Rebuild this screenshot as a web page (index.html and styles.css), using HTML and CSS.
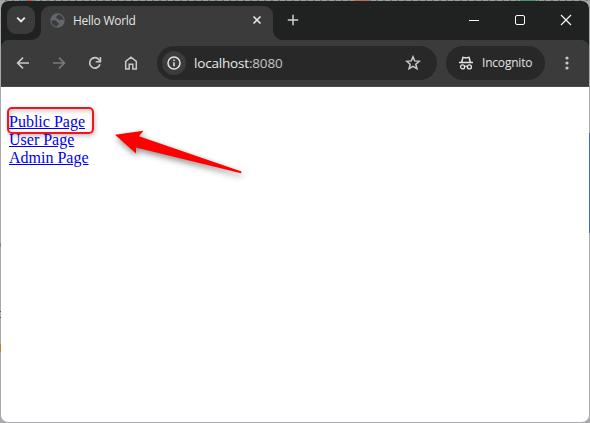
FILE: index.html
```html
<!DOCTYPE html>
<html lang="en">
<head>
<meta charset="utf-8">
<title>Hello World</title>
<link rel="stylesheet" href="styles.css">
</head>
<body>
<div class="desktop">
  <div class="window">
    <header class="tabstrip">
      <button class="tab-search" aria-label="Search tabs">
        <svg width="10" height="8" viewBox="0 0 10 8"><path d="M1.2 1.7 5 5.5l3.8-3.8" fill="none" stroke="#e8e8e8" stroke-width="1.9"/></svg>
      </button>
      <div class="tab">
        <svg class="globe" width="15" height="15" viewBox="0 0 15 15"><circle cx="7.5" cy="7.5" r="7.2" fill="#62676d"/><path d="M9.8 1.9C7.4 1.6 7.6 3 6.6 3.6 5.4 4.4 6 5.6 7.3 5.6c1.3 0 .9 1.5 2.3 1.5 1 0 1.4-.8 2.4-.5l1.6.9c.1-2.6-1.4-4.8-3.8-5.6M1.5 7.2h3.2c1.7 0 2.5 1 2.3 2.2h1.7v1.8L7 13.3c-3.4-.2-5.6-2.8-5.5-6.1" fill="#3b3b3b"/></svg>
        <span class="tab-title">Hello World</span>
        <svg class="tab-close" width="10" height="10" viewBox="0 0 10 10"><path d="m1.5 1.5 7 7m0-7-7 7" stroke="#e4e4e4" stroke-width="1.6"/></svg>
      </div>
      <svg class="new-tab" width="12" height="12" viewBox="0 0 12 12"><path d="M6 .8v10.4M.8 6h10.4" stroke="#cfcfcf" stroke-width="1.5"/></svg>
      <div class="controls">
        <svg width="12" height="12" viewBox="0 0 12 12"><path d="M1 6.5h10" stroke="#fff"/></svg>
        <svg width="12" height="12" viewBox="0 0 12 12"><rect x="1.5" y="1.5" width="9" height="9" rx="1.5" fill="none" stroke="#fff"/></svg>
        <svg width="12" height="12" viewBox="0 0 12 12"><path d="m1 1 10 10M11 1 1 11" stroke="#fff" stroke-width="1.1"/></svg>
      </div>
    </header>
    <nav class="toolbar">
      <div class="nav-icons">
        <svg width="16" height="16" viewBox="0 0 16 16"><path d="M14 8H3M8 2.6 2.6 8 8 13.4" fill="none" stroke="#c9c9c9" stroke-width="1.6"/></svg>
        <svg width="16" height="16" viewBox="0 0 16 16"><path d="M2 8h11M8 2.6 13.4 8 8 13.4" fill="none" stroke="#7b7b7b" stroke-width="1.6"/></svg>
        <svg width="16" height="16" viewBox="0 0 16 16"><path d="M12.9 9.2A5.2 5.2 0 1 1 12 4.7l1 1.3" fill="none" stroke="#c9c9c9" stroke-width="1.7"/><path d="M13.4 2v4.8H8.7" fill="none" stroke="#c9c9c9" stroke-width="1.6"/></svg>
        <svg width="16" height="16" viewBox="0 0 16 16"><path d="M2.7 14V6.3L8 2.2l5.3 4.1V14H9.8V9.2H6.2V14z" fill="none" stroke="#c9c9c9" stroke-width="1.5"/></svg>
      </div>
      <div class="omnibox">
        <span class="site-info"><svg width="14" height="14" viewBox="0 0 14 14"><circle cx="7" cy="7" r="6" fill="none" stroke="#e3e3e3" stroke-width="1.5"/><path d="M7 6.2v4M7 3.6v1.5" stroke="#e3e3e3" stroke-width="1.5"/></svg></span>
        <span class="url">localhost<span class="port">:8080</span></span>
        <svg class="star" width="16" height="16" viewBox="0 0 16 16"><path d="m8 1.8 1.7 4.1 4.6.4-3.5 3 1.1 4.4L8 11.3l-3.9 2.4 1.1-4.4-3.5-3 4.6-.4z" fill="none" stroke="#c9c9c9" stroke-width="1.5"/></svg>
      </div>
      <div class="incognito">
        <svg width="16" height="14" viewBox="0 0 16 14"><path d="M1 6.5h14M3.7 6 5 1.3l3 .6 3-.6L12.3 6" fill="none" stroke="#e3e3e3" stroke-width="1.5"/><circle cx="4.6" cy="10.9" r="2" fill="none" stroke="#e3e3e3" stroke-width="1.3"/><circle cx="11.4" cy="10.9" r="2" fill="none" stroke="#e3e3e3" stroke-width="1.3"/><path d="M6.5 10.6q1.5-.9 3 0" fill="none" stroke="#e3e3e3" stroke-width="1.2"/></svg>
        <span class="incognito-label">Incognito</span>
      </div>
      <svg class="more" width="4" height="14" viewBox="0 0 4 14"><g fill="#c9c9c9"><circle cx="2" cy="2" r="1.6"/><circle cx="2" cy="7" r="1.6"/><circle cx="2" cy="12" r="1.6"/></g></svg>
    </nav>
    <main class="page">
      <a href="#">Public Page</a>
      <a href="#">User Page</a>
      <a href="#">Admin Page</a>
    </main>
  </div>
  <div class="highlight"></div>
  <svg class="arrow" width="150" height="70" viewBox="0 0 150 70"><path d="M15 19.7 43.5 15.8 39 21.3 141.5 56.6 141 58.2 36 32.5V38.5z" fill="#f00"/></svg>
</div>
</body>
</html>
```
FILE: styles.css
```css
* { box-sizing: border-box; }
body { margin: 0; }
svg { display: block; flex: none; }

.desktop {
  position: relative;
  width: 590px;
  height: 423px;
  padding: 1px;
  overflow: hidden;
  background:
    linear-gradient(#486cab, #486cab) 589px 133px / 1px 100px no-repeat,
    linear-gradient(#b5862c, #b5862c) 0 344px / 1px 8px no-repeat,
    linear-gradient(#456, #456) 0 311px / 1px 1px no-repeat,
    linear-gradient(#456, #456) 0 317px / 1px 1px no-repeat,
    linear-gradient(#688fae, #688fae) 0 243px / 1px 4px no-repeat,
    linear-gradient(#c56a4e, #c56a4e) 354px 0 / 16px 1px no-repeat,
    linear-gradient(#3f9a5c, #3f9a5c) 520px 0 / 16px 1px no-repeat,
    linear-gradient(90deg, #4d8bd0 4px, #d05045 4px 10px, #58a060 10px) 22px 0 / 14px 1px no-repeat,
    repeating-linear-gradient(90deg, #9aa0a0 0 5px, #737878 5px 7px) 0 0 / 590px 1px no-repeat,
    #a9a9ab;
}

.window {
  width: 588px;
  height: 421px;
  display: flex;
  flex-direction: column;
  overflow: hidden;
  border-radius: 7px;
  background: #fff;
}

.tabstrip {
  height: 39px;
  flex: none;
  display: flex;
  padding: 5px 17px 0 6px;
  background: #1f2220;
}

.tab-search {
  width: 28px;
  height: 28px;
  padding: 0;
  border: 0;
  border-radius: 9px;
  display: grid;
  place-items: center;
  background: #3b3b3b;
}

.tab {
  position: relative;
  width: 232px;
  height: 34px;
  margin-left: 6px;
  padding: 0 11px 6px 9px;
  display: flex;
  align-items: center;
  border-radius: 9px 9px 0 0;
  background: #3b3b3b;
}
.tab::before,
.tab::after {
  content: "";
  position: absolute;
  bottom: 0;
  width: 10px;
  height: 10px;
}
.tab::before {
  left: -10px;
  background: radial-gradient(circle at 0 0, transparent 9.5px, #3b3b3b 10.5px);
}
.tab::after {
  right: -10px;
  background: radial-gradient(circle at 100% 0, transparent 9.5px, #3b3b3b 10.5px);
}

.tab-title {
  margin: 2px 0 0 8px;
  font: 12px/16px "Open Sans", "Noto Sans", sans-serif;
  letter-spacing: -0.26px;
  color: #e3e3e3;
  white-space: nowrap;
}
.tab-close { margin-left: auto; }
.new-tab { margin: 8px 0 0 14px; }

.controls {
  margin: 8px 0 0 auto;
  display: flex;
  gap: 34px;
}

.toolbar {
  position: relative;
  height: 47px;
  flex: none;
  display: flex;
  align-items: center;
  padding: 0 20px 1px 14px;
  background: #3b3b3b;
  border-bottom: 1px solid #4a4a4a;
}
.toolbar::before,
.toolbar::after {
  content: "";
  position: absolute;
  top: 0;
  width: 8px;
  height: 8px;
}
.toolbar::before {
  left: 0;
  background: radial-gradient(circle at 100% 100%, transparent 7.5px, #1f2220 8.5px);
}
.toolbar::after {
  right: 0;
  background: radial-gradient(circle at 0 100%, transparent 7.5px, #1f2220 8.5px);
}

.nav-icons {
  display: flex;
  gap: 20px;
}

.omnibox {
  width: 280px;
  height: 34px;
  margin-left: 18px;
  padding: 0 16px 0 5px;
  display: flex;
  align-items: center;
  border-radius: 17px;
  background: #282828;
}
.site-info {
  width: 24px;
  height: 24px;
  border-radius: 50%;
  display: grid;
  place-items: center;
  background: #3c3c3c;
}
.url {
  margin-left: 8px;
  font: 13.5px/20px "Open Sans", "Noto Sans", sans-serif;
  letter-spacing: -0.18px;
  color: #e8e8e8;
}
.port { color: #c3c3c3; }
.star { margin-left: auto; }

.incognito {
  width: 99px;
  height: 34px;
  margin-left: 9px;
  padding-left: 12px;
  display: flex;
  align-items: center;
  gap: 8px;
  border-radius: 17px;
  background: #282828;
}
.incognito-label {
  margin-top: 1px;
  font: 12px/16px "Open Sans", "Noto Sans", sans-serif;
  letter-spacing: -0.2px;
  color: #e3e3e3;
}
.more { margin-left: auto; }

.page {
  flex: 1;
  display: flex;
  flex-direction: column;
  align-items: flex-start;
  padding: 26px 8px;
  font: 16px/18px "Liberation Serif", "Times New Roman", serif;
}
.page a { color: #0000ee; text-decoration: underline; }

.highlight {
  position: absolute;
  left: 7px;
  top: 107px;
  width: 87px;
  height: 27px;
  border: 2px solid #f5141a;
  border-radius: 5px;
  box-shadow: 1px 2px 4px rgba(0, 0, 0, 0.25), inset 1px 2px 5px rgba(0, 0, 0, 0.22);
}
.arrow {
  position: absolute;
  left: 100px;
  top: 115px;
  overflow: visible;
  filter: drop-shadow(1px 3px 3px rgba(0, 0, 0, 0.45));
}
```
